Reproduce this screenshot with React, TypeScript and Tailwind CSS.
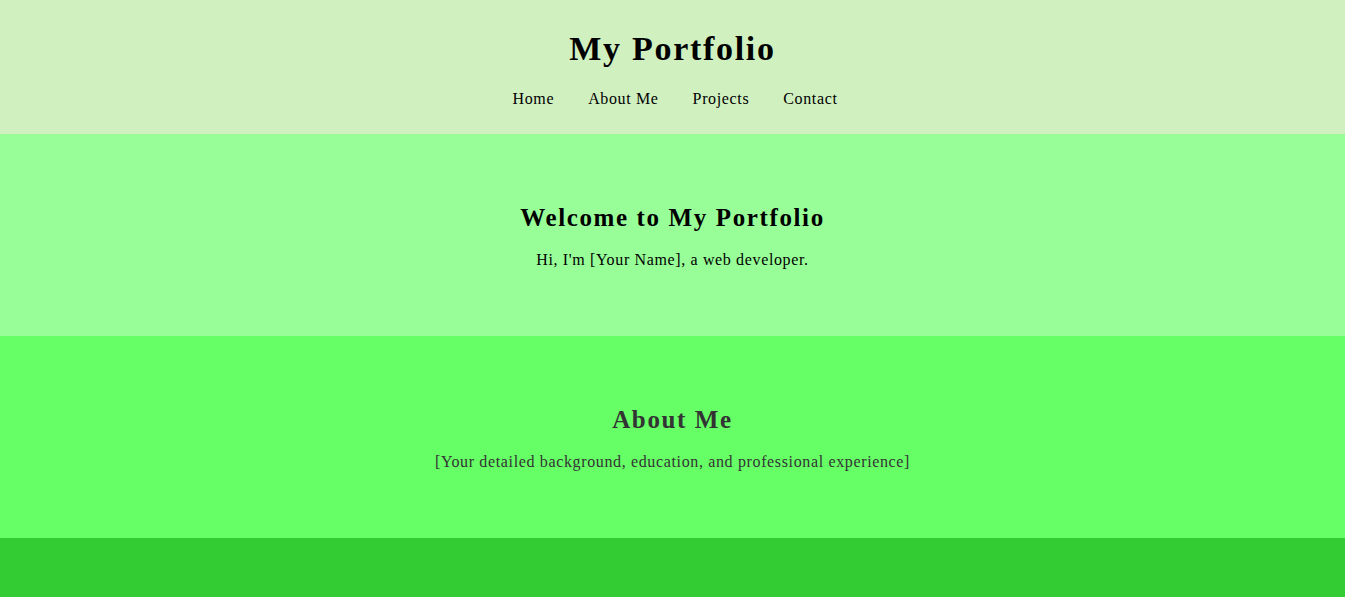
export default function App() {
  const navItems = ["Home", "About Me", "Projects", "Contact"];
  return (
    <div className="min-h-[597px] bg-[#33cc33] font-['Liberation_Serif',Georgia,serif] text-black">
      <header className="bg-[#d0f0c0] pt-[10px] pb-[26px] text-center">
        <h1 className="mt-[21px] mb-[23px] text-[34px] font-bold leading-[36px] tracking-[0.05em]">My Portfolio</h1>
        <nav>
          <ul className="flex justify-center gap-[34px] text-[16px] leading-[18px] tracking-[0.04em] pl-[5px]">
            {navItems.map((item) => (
              <li key={item}>
                <a href="#">{item}</a>
              </li>
            ))}
          </ul>
        </nav>
      </header>
      <section className="bg-[#98ff98] px-5 pt-[50px] pb-[51px] text-center">
        <h2 className="mt-[20px] mb-[20px] text-[25px] font-bold leading-[27px] tracking-[0.065em]">Welcome to My Portfolio</h2>
        <p className="mb-[16px] text-[16px] leading-[18px] tracking-[0.04em]">Hi, I'm [Your Name], a web developer.</p>
      </section>
      <section className="bg-[#66ff66] px-5 pt-[50px] pb-[51px] text-center text-[#333333]">
        <h2 className="mt-[20px] mb-[20px] text-[25px] font-bold leading-[27px] tracking-[0.065em]">About Me</h2>
        <p className="mb-[16px] text-[16px] leading-[18px] tracking-[0.04em]">[Your detailed background, education, and professional experience]</p>
      </section>
    </div>
  );
}
